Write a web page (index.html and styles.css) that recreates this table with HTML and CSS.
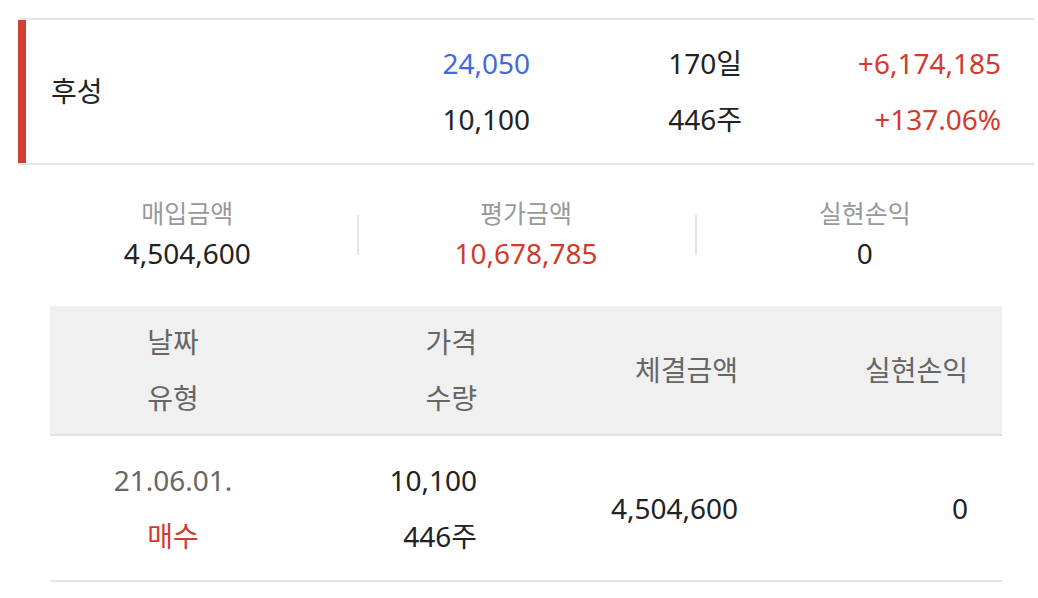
FILE: index.html
```html
<!DOCTYPE html>
<html lang="ko">
<head>
<meta charset="utf-8">
<link rel="stylesheet" href="styles.css">
</head>
<body>
<div class="page">
  <section class="stock-card">
    <div class="stock-inner">
      <div class="stock-name">후성</div>
      <div class="stock-col">
        <div class="line blue">24,050</div>
        <div class="line">10,100</div>
      </div>
      <div class="stock-col">
        <div class="line">170일</div>
        <div class="line">446주</div>
      </div>
      <div class="stock-col">
        <div class="line red">+6,174,185</div>
        <div class="line red">+137.06%</div>
      </div>
    </div>
  </section>

  <section class="summary">
    <div class="sum-item">
      <div class="sum-label">매입금액</div>
      <div class="sum-value">4,504,600</div>
    </div>
    <div class="sum-item divided">
      <div class="sum-label">평가금액</div>
      <div class="sum-value red">10,678,785</div>
    </div>
    <div class="sum-item divided">
      <div class="sum-label">실현손익</div>
      <div class="sum-value">0</div>
    </div>
  </section>

  <section class="trade-table">
    <div class="trow thead">
      <div class="cell c1"><div class="tl">날짜</div><div class="tl">유형</div></div>
      <div class="cell c2"><div class="tl">가격</div><div class="tl">수량</div></div>
      <div class="cell c3"><div class="tl">체결금액</div></div>
      <div class="cell c4"><div class="tl">실현손익</div></div>
    </div>
    <div class="trow tbody">
      <div class="cell c1"><div class="tl date">21.06.01.</div><div class="tl red">매수</div></div>
      <div class="cell c2"><div class="tl">10,100</div><div class="tl">446주</div></div>
      <div class="cell c3"><div class="tl">4,504,600</div></div>
      <div class="cell c4"><div class="tl">0</div></div>
    </div>
  </section>
</div>
</body>
</html>
```
FILE: styles.css
```css
* { box-sizing: border-box; }
html, body { margin: 0; padding: 0; background: #ffffff; }
body {
  font-family: "Noto Sans", "Noto Sans CJK KR", sans-serif;
  color: #222222;
  font-size: 28px;
}
.page { padding-top: 18px; }

.red { color: #d23a2c; }
.blue { color: #3f6ae0; }

.stock-card {
  margin: 0 4px 0 18px;
  border-top: 2px solid #e6e6e6;
  border-bottom: 2px solid #e6e6e6;
}
.stock-inner {
  border-left: 8px solid #d03f30;
  display: grid;
  grid-template-columns: 279px 200px 212px 259px;
  align-items: center;
  padding: 15px 33px 16px 25px;
}
.stock-name { line-height: 56px; }
.stock-col { text-align: right; }
.line { line-height: 56px; white-space: nowrap; }

.summary {
  display: grid;
  grid-template-columns: repeat(3, 1fr);
  margin: 0 4px 0 18px;
  padding: 30px 0 31px;
  align-items: center;
}
.sum-item {
  text-align: center;
  position: relative;
}
.divided::before {
  content: "";
  position: absolute;
  left: 0;
  top: 20px;
  height: 40px;
  width: 2px;
  background: #e4e4e4;
}
.sum-label {
  color: #999999;
  font-size: 25px;
  line-height: 36px;
}
.sum-value {
  line-height: 44px;
}

.trade-table {
  margin: 0 36px 0 50px;
}
.trow {
  display: grid;
  grid-template-columns: 246px 181px 261px 264px;
  align-items: center;
}
.thead {
  background: #f0f0f0;
  color: #666666;
  padding: 8px 0;
  border-bottom: 2px solid #e3e3e3;
}
.tbody {
  padding: 16px 0;
  border-bottom: 2px solid #e6e6e6;
}
.tl { line-height: 56px; white-space: nowrap; }
.c1 { text-align: center; }
.c2, .c3 { text-align: right; }
.c4 { text-align: right; padding-right: 34px; }
.date { color: #666666; }
```
